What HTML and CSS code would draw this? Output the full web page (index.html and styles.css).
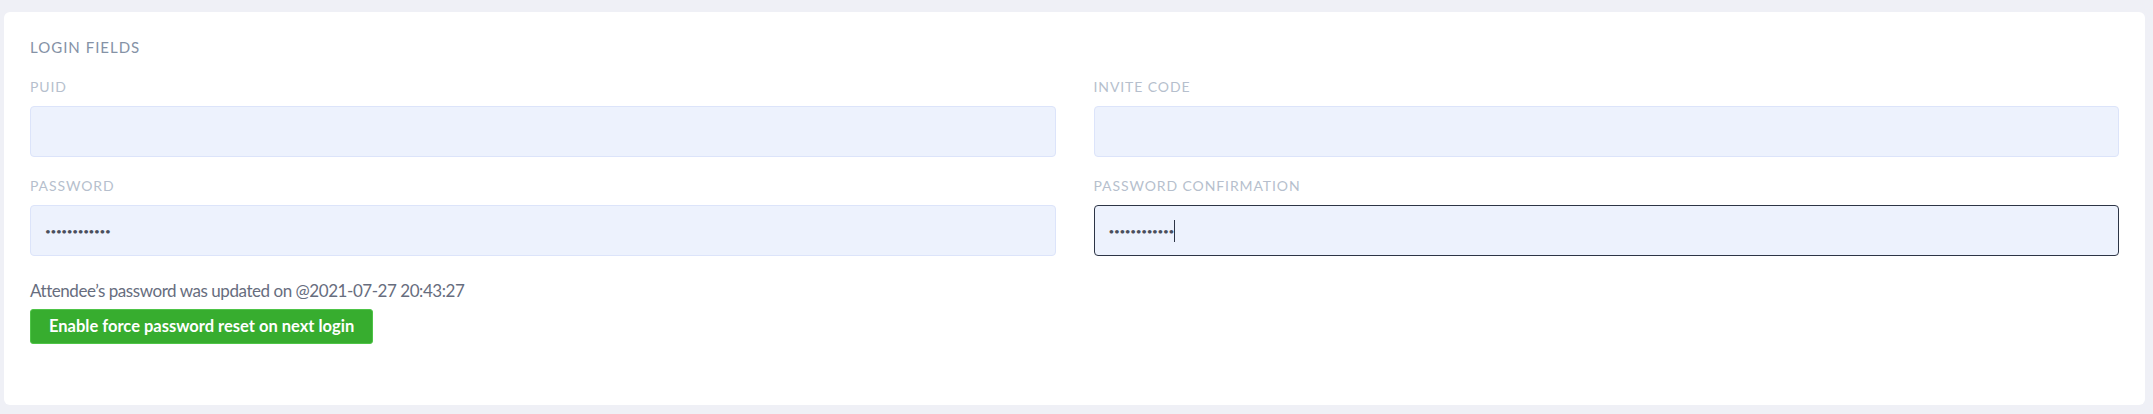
FILE: index.html
```html
<!DOCTYPE html>
<html lang="en">
<head>
<meta charset="utf-8">
<title>Login fields</title>
<link rel="stylesheet" href="styles.css">
</head>
<body>
<div class="page">
  <section class="card">
    <h2 class="card-title">LOGIN FIELDS</h2>
    <div class="grid">
      <div class="group">
        <label class="label">PUID</label>
        <div class="field"></div>
      </div>
      <div class="group">
        <label class="label">INVITE CODE</label>
        <div class="field"></div>
      </div>
      <div class="group">
        <label class="label">PASSWORD</label>
        <div class="field"><span class="dots">••••••••••••</span></div>
      </div>
      <div class="group">
        <label class="label">PASSWORD CONFIRMATION</label>
        <div class="field focused"><span class="dots">••••••••••••</span><span class="caret"></span></div>
      </div>
    </div>
    <p class="note">Attendee’s password was updated on @2021-07-27 20:43:27</p>
    <button class="btn" type="button">Enable force password reset on next login</button>
  </section>
</div>
</body>
</html>
```
FILE: styles.css
```css
html, body {
  margin: 0;
  padding: 0;
  background: #eff0f6;
}
body {
  font-family: Lato, "Noto Sans", sans-serif;
}
.page {
  padding: 12px 8px 9px 4px;
}
.card {
  background: #ffffff;
  border-radius: 6px;
  padding: 25px 26px 60px 26px;
  height: 393px;
  box-sizing: border-box;
}
.card-title {
  margin: 0;
  font-size: 15px;
  line-height: 20px;
  font-weight: 400;
  letter-spacing: 1px;
  color: #8592a6;
}
.grid {
  display: grid;
  grid-template-columns: 1fr 1fr;
  column-gap: 38px;
  margin-top: 20px;
  row-gap: 19px;
}
.group {
  display: flex;
  flex-direction: column;
}
.label {
  font-size: 14px;
  line-height: 20px;
  letter-spacing: 0.9px;
  color: #b6bfcd;
  margin-bottom: 9px;
}
.field {
  height: 51px;
  box-sizing: border-box;
  background: #edf2fd;
  border: 1px solid #dce4fa;
  border-radius: 4px;
  display: flex;
  align-items: center;
  padding-left: 14px;
}
.field.focused {
  border-color: #2d3546;
}
.dots {
  font-size: 10px;
  letter-spacing: -0.35px;
  color: #4a4f5c;
}
.caret {
  width: 1px;
  height: 22px;
  background: #2d3546;
}
.note {
  margin: 23px 0 0 0;
  font-size: 17px;
  line-height: 24px;
  letter-spacing: -0.45px;
  color: #676d7e;
}
.btn {
  display: block;
  margin-top: 6px;
  height: 35px;
  padding: 0 18px;
  font-family: Lato, "Noto Sans", sans-serif;
  font-size: 16.5px;
  font-weight: 700;
  line-height: 33px;
  color: #ffffff;
  background: #37ad2f;
  border: 1px solid #4ec447;
  border-radius: 3px;
}
```
